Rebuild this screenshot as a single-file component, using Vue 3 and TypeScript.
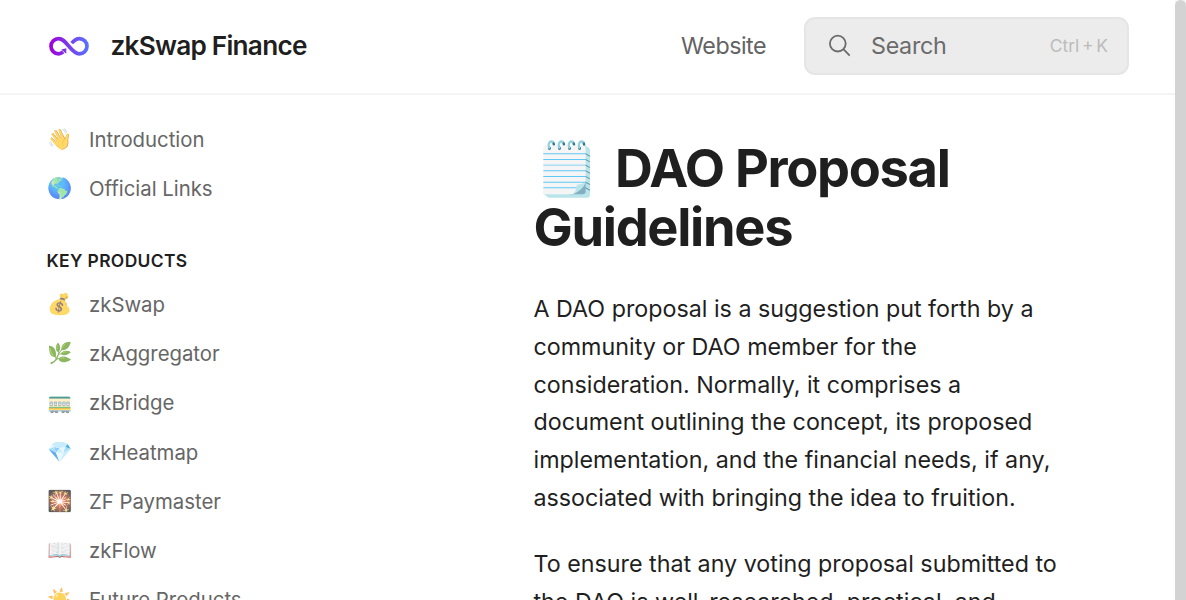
<script setup lang="ts">
const links = [['👋','Introduction'],['🌎','Official Links']]
const products = [['💰','zkSwap'],['🌿','zkAggregator'],['🚃','zkBridge'],['💎','zkHeatmap'],['🎇','ZF Paymaster'],['📖','zkFlow'],['☀️','Future Products']]
const p1 = ['A DAO proposal is a suggestion put forth by a','community or DAO member for the','consideration. Normally, it comprises a','document outlining the concept, its proposed','implementation, and the financial needs, if any,','associated with bringing the idea to fruition.']
const p2 = ['To ensure that any voting proposal submitted to','the DAO is well-researched, practical, and']
</script>

<template>
  <div class="page">
    <div class="main">
      <header>
        <svg class="logo" viewBox="0 0 42 22" width="42" height="22">
          <defs><linearGradient id="g" gradientUnits="userSpaceOnUse" x1="1" x2="41" y1="0" y2="0"><stop offset="0" stop-color="#a000d8"/><stop offset="1" stop-color="#5577ff"/></linearGradient></defs>
          <path d="M15.2 16.9C13.6 18.3 12 18.8 10.6 18.8A7.6 7.6 0 0 1 10.6 3.6C14.4 3.6 16.6 6 20.9 11.2C25 16.2 27.6 18.8 31.4 18.8A7.6 7.6 0 0 0 31.4 3.6C27.9 3.6 25.8 5.7 23.7 8.1" fill="none" stroke="url(#g)" stroke-width="3.7"/>
          <path d="M13.2 14.5L18.3 13.2V18.8Z" fill="url(#g)"/>
        </svg>
        <span class="brand">zkSwap Finance</span>
        <span class="website">Website</span>
        <div class="search">
          <svg viewBox="0 0 24 24" width="24" height="24" fill="none" stroke="#6b6b6b" stroke-width="1.8"><circle cx="9.8" cy="9.6" r="7.9"/><path d="M15.4 15.2L21.7 21.6"/></svg>
          <span class="label">Search</span><span class="key">Ctrl + K</span>
        </div>
      </header>
      <div class="body">
        <nav>
          <a v-for="l in links" :key="l[1]"><i>{{ l[0] }}</i><span>{{ l[1] }}</span></a>
          <h2>KEY PRODUCTS</h2>
          <a v-for="l in products" :key="l[1]"><i>{{ l[0] }}</i><span>{{ l[1] }}</span></a>
        </nav>
        <article>
          <h1><span class="pad">🗒️</span>DAO Proposal<br>Guidelines</h1>
          <p><span v-for="t in p1" :key="t">{{ t }}</span></p>
          <p><span v-for="t in p2" :key="t">{{ t }}</span></p>
        </article>
      </div>
    </div>
    <div class="scroll"><div class="thumb"></div></div>
  </div>
</template>

<style>
body { overflow: hidden; }
</style>
<style scoped>
.page { height: 600px; display: flex; overflow: hidden; background: #fff; font-family: Inter, "Noto Color Emoji", sans-serif; color: #1f1f1f; }
.main { flex: 1; min-width: 0; }
header { height: 95px; box-sizing: border-box; border-bottom: 2px solid #f4f4f4; display: flex; align-items: center; padding: 0 46px 2px 48px; }
.logo { margin-right: 20.5px; }
.brand { font-size: 26.18px; font-weight: 600; letter-spacing: -0.75px; }
.website { margin-left: auto; margin-right: 38px; font-size: 23.27px; letter-spacing: -.5px; color: #636363; }
.search { width: 325px; height: 58px; box-sizing: border-box; border: 2px solid #e5e5e5; border-radius: 11px; background: #ececec; display: flex; align-items: center; padding: 0 19px 0 22px; color: #6b6b6b; }
.label { margin-left: 19px; font-size: 23.27px; letter-spacing: -.3px; }
.key { margin-left: auto; font-size: 17.45px; word-spacing: -2.2px; color: #bbb; }
.body { display: flex; height: 505px; overflow: hidden; }
nav { width: 533.5px; padding-top: 20px; box-sizing: border-box; }
nav a { height: 49.2px; display: flex; align-items: center; padding-left: 47px; font-size: 20.36px; letter-spacing: -.02px; color: #666; }
nav i { width: 42px; font-style: normal; opacity: .7; padding-bottom: 2px; }
h2 { margin: 37px 0 7.6px 46.5px; font-size: 17.45px; line-height: 22px; font-weight: 600; letter-spacing: .35px; }
article { flex: 1; padding-top: 44px; white-space: nowrap; }
h1 { margin: 0 0 33px; font-size: 52.36px; line-height: 59px; font-weight: 700; letter-spacing: -1.31px; }
.pad { margin-left: .5px; margin-right: 17px; }
p { margin: 0 0 28.5px; font-size: 23.27px; line-height: 37.8px; }
p span { display: block; }
.scroll { width: 11px; background: #f6f6f6; }
.thumb { height: 600px; border-radius: 6px 6px 0 0; background: #d3d3d3; }
</style>
